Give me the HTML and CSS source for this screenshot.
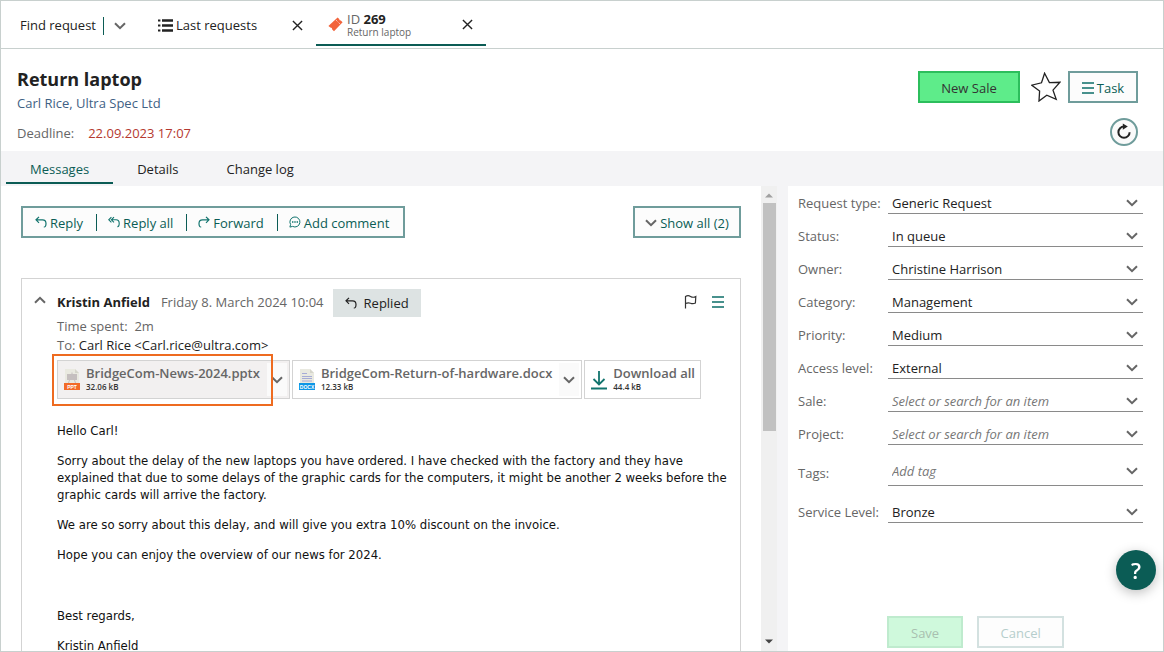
FILE: index.html
```html
<!DOCTYPE html>
<html lang="en">
<head>
<meta charset="utf-8">
<title>Return laptop</title>
<link rel="stylesheet" href="styles.css">
</head>
<body>
<svg class="symbols" aria-hidden="true">
  <symbol id="chevron" viewBox="0 0 12 8"><path d="M1 1.2 6 6.2 11 1.2" fill="none" stroke="currentColor" stroke-width="2"/></symbol>
  <symbol id="close" viewBox="0 0 12 12"><path d="M1 1 11 11M11 1 1 11" fill="none" stroke="currentColor" stroke-width="1.5"/></symbol>
  <symbol id="menu" viewBox="0 0 12 12"><path d="M0 1h12M0 6h12M0 11h12" fill="none" stroke="currentColor" stroke-width="1.4"/></symbol>
  <symbol id="reply" viewBox="0 0 12 12"><path d="M4 .8 1 3.8 4 6.8M1 3.8H7.5Q11 3.8 11 7.5T8.8 11" fill="none" stroke="currentColor" stroke-width="1.2"/></symbol>
</svg>
<div class="app">
  <nav class="topbar">
    <div class="find">
      <button class="plain" type="button">Find request</button>
      <button class="plain find-more" type="button" aria-label="More search options"><svg class="chevron"><use href="#chevron"/></svg></button>
    </div>
    <div class="last">
      <button class="plain last-label" type="button">
        <svg width="15" height="13" viewBox="0 0 15 13"><path d="M4 1.5h11M4 6.5h11M4 11.5h11" stroke="#222" stroke-width="2.6"/><path d="M0 1.5h2.4M0 6.5h2.4M0 11.5h2.4" stroke="#222" stroke-width="2.2"/></svg>
        Last requests
      </button>
      <button class="plain" type="button" aria-label="Close last requests"><svg class="close"><use href="#close"/></svg></button>
    </div>
    <div class="ticket">
      <svg width="15" height="15" viewBox="0 0 15 15"><path d="M9.6.4 11.2 2q0 1.6 1.6 1.6L14.6 5.2 6 14.2 4.2 12.4q.2-1.8-1.8-1.8L.4 8.9Z" fill="#f2643c"/><path d="m8 3 4.2 4.2" stroke="#fff" stroke-width=".7" stroke-dasharray="1.2 1"/></svg>
      <div class="ticket-text">
        <div class="ticket-id">ID <b>269</b></div>
        <div class="ticket-name">Return laptop</div>
      </div>
      <button class="plain" type="button" aria-label="Close request"><svg class="close"><use href="#close"/></svg></button>
    </div>
  </nav>

  <header class="header">
    <div>
      <h1>Return laptop</h1>
      <a class="contact" href="#contact">Carl Rice, Ultra Spec Ltd</a>
      <div class="deadline"><span>Deadline:</span><time>22.09.2023 17:07</time></div>
    </div>
    <div class="header-side">
      <div class="header-actions">
        <button class="btn btn-primary new-sale" type="button">New Sale</button>
        <button class="plain star" type="button" aria-label="Add to favourites"><svg width="30" height="30" viewBox="0 0 30 30"><path d="M13.6 1.2 18.4 10.6 28.8 10.3 22 18.2 25.2 27.4 15.8 23.2 8 29 8.6 19 .8 13.2 10.5 10.8Z" fill="#fff" stroke="#222" stroke-width="1.3"/></svg></button>
        <button class="btn btn-task" type="button"><svg class="menu"><use href="#menu"/></svg>Task</button>
      </div>
      <button class="refresh" type="button" aria-label="Refresh"><svg width="16" height="17" viewBox="0 0 16 17"><path d="M8.5 3.6H8A5.6 5.6 0 1 0 13.6 9.2" fill="none" stroke="#222" stroke-width="2"/><path d="M6.8.6 11.8 3.6 6.8 6.8Z" fill="#222"/></svg></button>
    </div>
  </header>

  <nav class="tabs">
    <button class="tab tab-active" type="button">Messages</button>
    <button class="tab" type="button">Details</button>
    <button class="tab" type="button">Change log</button>
  </nav>

  <div class="body">
    <main class="messages">
      <div class="toolbar">
        <div class="toolbar-group">
          <button type="button"><svg class="arrow"><use href="#reply"/></svg>Reply</button>
          <button type="button"><svg class="arrow" viewBox="0 0 12 12"><path d="M3.4 1.2.8 3.8 3.4 6.4M6 1.2 3.4 3.8 6 6.4M3.4 3.8H8Q11.2 3.8 11.2 7.3T9.4 10.6" fill="none" stroke="currentColor" stroke-width="1.1"/></svg>Reply all</button>
          <button type="button"><svg class="arrow" viewBox="0 0 12 12"><path d="M8 .8 11 3.8 8 6.8M11 3.8H4.5Q1 3.8 1 7.5T3.2 11" fill="none" stroke="currentColor" stroke-width="1.2"/></svg>Forward</button>
          <button type="button"><svg class="arrow" viewBox="0 0 12 12"><path d="M.9 11.1 1.6 8.5A5 5 0 1 1 3.6 10.4Z" fill="none" stroke="currentColor"/><path d="M3 6h1.4M5.3 6h1.4M7.6 6H9" stroke="currentColor" stroke-width="1.4"/></svg>Add comment</button>
        </div>
        <button class="btn show-all" type="button"><svg class="chevron"><use href="#chevron"/></svg>Show all (2)</button>
      </div>

      <article class="card">
        <button class="plain collapse" type="button" aria-label="Collapse message"><svg class="chevron chevron-up"><use href="#chevron"/></svg></button>
        <div class="card-main">
          <div class="card-head">
            <b>Kristin Anfield</b>
            <time>Friday 8. March 2024 10:04</time>
            <span class="replied"><svg class="arrow"><use href="#reply"/></svg>Replied</span>
            <button class="plain flag" type="button" aria-label="Flag message"><svg width="13" height="14" viewBox="0 0 13 14"><path d="M1.5 13.5V1.5Q4-.2 6.5 1.4T11.8 1.6L11.4 8Q9 9.2 6.5 8.2T1.5 8.6" fill="none" stroke="#333" stroke-width="1.2"/></svg></button>
            <button class="plain" type="button" aria-label="Message menu"><svg class="menu"><use href="#menu"/></svg></button>
          </div>
          <div class="meta">Time spent: &nbsp;2m</div>
          <div class="meta">To: <span>Carl Rice &lt;Carl.rice@ultra.com&gt;</span></div>

          <div class="files">
            <div class="file file-selected">
              <svg class="file-icon" width="16" height="21" viewBox="0 0 16 21"><path d="M1 0h10l4 4v10H1Z" fill="#e9e9e0"/><path d="M11 0l4 4h-4Z" fill="#d5d5cb"/><path d="M3 5h10v6H3ZM7.5 3.5h1V5h-1ZM5 11h1l-1 3H4ZM10 11h1l1 3h-1Z" fill="#c5bfbf"/><path d="M0 14h16v7H0Z" fill="#f36b27"/><text x="8" y="19.5" class="ext">PPT</text></svg>
              <div class="file-text"><a href="#pptx">BridgeCom-News-2024.pptx</a><small>32.06 kB</small></div>
              <button class="file-more" type="button" aria-label="Options for BridgeCom-News-2024.pptx"><svg class="chevron"><use href="#chevron"/></svg></button>
              <span class="highlight"></span>
            </div>
            <div class="file">
              <svg class="file-icon" width="16" height="21" viewBox="0 0 16 21"><path d="M1 0h10l4 4v10H1Z" fill="#e9e9e0"/><path d="M11 0l4 4h-4Z" fill="#d5d5cb"/><path d="M3 4.5h5M3 7.5h10M3 9.5h10M3 12h10" stroke="#a6abd6"/><path d="M0 14h16v7H0Z" fill="#0d96e6"/><text x="8" y="19.5" class="ext">DOCX</text></svg>
              <div class="file-text"><a href="#docx">BridgeCom-Return-of-hardware.docx</a><small>12.33 kB</small></div>
              <button class="file-more" type="button" aria-label="Options for BridgeCom-Return-of-hardware.docx"><svg class="chevron"><use href="#chevron"/></svg></button>
            </div>
            <div class="file">
              <svg class="file-icon" width="16" height="20" viewBox="0 0 16 20"><path d="M8 1v13M2.5 9 8 14.5 13.5 9" fill="none" stroke="#12746e" stroke-width="1.8"/><path d="M0 18.5h16" stroke="#12746e" stroke-width="2"/></svg>
              <div class="file-text"><a href="#all">Download all</a><small>44.4 kB</small></div>
            </div>
          </div>

          <div class="letter">
            <p>Hello Carl!</p>
            <p>Sorry about the delay of the new laptops you have ordered. I have checked with the factory and they have<br>explained that due to some delays of the graphic cards for the computers, it might be another 2 weeks before the<br>graphic cards will arrive the factory.</p>
            <p>We are so sorry about this delay, and will give you extra 10% discount on the invoice.</p>
            <p>Hope you can enjoy the overview of our news for 2024.</p>
            <p class="blank">&nbsp;</p>
            <p>Best regards,</p>
            <p>Kristin Anfield</p>
          </div>
        </div>
      </article>
    </main>

    <div class="scroll">
      <svg width="8" height="5" viewBox="0 0 8 5"><path d="M0 4.5 4 .5 8 4.5Z" fill="#a0a0a0"/></svg>
      <div class="thumb"></div>
      <svg width="8" height="5" viewBox="0 0 8 5"><path d="M0 .5 4 4.5 8 .5Z" fill="#444"/></svg>
    </div>

    <form class="panel">
      <div class="row"><label for="type">Request type:</label><div class="field"><select id="type"><option>Generic Request</option></select><svg class="chevron"><use href="#chevron"/></svg></div></div>
      <div class="row"><label for="status">Status:</label><div class="field"><select id="status"><option>In queue</option></select><svg class="chevron"><use href="#chevron"/></svg></div></div>
      <div class="row"><label for="owner">Owner:</label><div class="field"><select id="owner"><option>Christine Harrison</option></select><svg class="chevron"><use href="#chevron"/></svg></div></div>
      <div class="row"><label for="category">Category:</label><div class="field"><select id="category"><option>Management</option></select><svg class="chevron"><use href="#chevron"/></svg></div></div>
      <div class="row"><label for="priority">Priority:</label><div class="field"><select id="priority"><option>Medium</option></select><svg class="chevron"><use href="#chevron"/></svg></div></div>
      <div class="row"><label for="access">Access level:</label><div class="field"><select id="access"><option>External</option></select><svg class="chevron"><use href="#chevron"/></svg></div></div>
      <div class="row"><label for="sale">Sale:</label><div class="field"><input id="sale" type="text" placeholder="Select or search for an item"><svg class="chevron"><use href="#chevron"/></svg></div></div>
      <div class="row"><label for="project">Project:</label><div class="field"><input id="project" type="text" placeholder="Select or search for an item"><svg class="chevron"><use href="#chevron"/></svg></div></div>
      <div class="row row-tags"><label for="tags">Tags:</label><div class="field"><input id="tags" type="text" placeholder="Add tag"><svg class="chevron"><use href="#chevron"/></svg></div></div>
      <div class="row"><label for="level">Service Level:</label><div class="field"><select id="level"><option>Bronze</option></select><svg class="chevron"><use href="#chevron"/></svg></div></div>
      <div class="panel-actions">
        <button class="btn btn-primary" type="submit" disabled>Save</button>
        <button class="btn cancel" type="button" disabled>Cancel</button>
      </div>
    </form>
  </div>
  <button class="help" type="button" aria-label="Help">?</button>
</div>
</body>
</html>
```
FILE: styles.css
```css
* { box-sizing: border-box; }

body {
  margin: 0;
  font: 13px/17px "Segoe UI", "Open Sans", "Noto Sans", sans-serif;
  color: #222;
  background: #fff;
}

button, input, select { font: inherit; color: inherit; }
a { color: inherit; text-decoration: none; }
svg { display: block; flex: none; }
.symbols { display: none; }

.app {
  display: flex;
  flex-direction: column;
  height: 100vh;
  overflow: hidden;
  border: 1px solid #c8d0ce;
}

.plain { display: flex; align-items: center; padding: 0; border: 0; background: none; }
.chevron { width: 12px; height: 8px; color: #666; }
.chevron-up { transform: rotate(180deg); }
.close { width: 11px; height: 11px; color: #222; }
.menu { width: 12px; height: 12px; color: #0d6e68; }
.arrow { width: 12px; height: 12px; }

/* Top bar */
.topbar {
  display: flex;
  flex: none;
  height: 48px;
  padding-left: 19px;
  border-bottom: 1px solid #c8d0ce;
}
.find, .last { display: flex; align-items: center; padding-top: 2px; }
.find { width: 138px; }
.find-more { height: 18px; margin-left: 7px; padding-left: 10px; border-left: 1px solid #0b5c55; }
.last { width: 145px; justify-content: space-between; }
.last-label { gap: 3px; }
.ticket {
  display: flex;
  align-items: center;
  width: 170px;
  height: 45px;
  margin-left: 13px;
  padding: 4px 13px 0 12px;
  border-bottom: 2px solid #0b5c55;
}
.ticket-text { flex: 1; margin-left: 4px; padding-top: 2px; }
.ticket-id { line-height: 13px; color: #666; }
.ticket-id b { color: #222; }
.ticket-name { font-size: 10px; line-height: 12px; color: #666; }

/* Request header */
.header {
  display: flex;
  flex: none;
  justify-content: space-between;
  height: 102px;
  padding: 18px 25px 0 16px;
}
h1 { margin: 0; font-size: 18px; line-height: 24px; }
.contact { display: block; margin-top: 4px; color: #3f6184; }
.deadline { display: flex; gap: 14px; margin-top: 13px; color: #666; }
.deadline time { color: #b5392f; }
.header-side { display: flex; flex-direction: column; align-items: flex-end; gap: 15px; padding-top: 4px; }
.header-actions { display: flex; align-items: center; }
.star { margin: 0 7px 0 11px; }

.btn {
  display: flex;
  align-items: center;
  justify-content: center;
  gap: 3px;
  height: 32px;
  padding: 2px 14px 0;
  border: 2px solid #6f9c9b;
  background: #fcfcfc;
  color: #0b5c55;
}
.btn-primary { padding: 2px 22px 0; border-color: #2cbe5c; background: #5eec8a; color: #333; }
.new-sale { width: 102px; padding: 2px 0 0; }
.btn-task { width: 70px; padding: 2px 8px 0; }
.cancel { width: 87px; }
.btn:disabled { border-color: #d3e1e0; background: #fdfdfd; color: #b6cecc; }
.btn-primary:disabled { border-color: #bfebce; background: #cff9dc; color: #a9bfb0; }
.refresh {
  display: grid;
  place-items: center;
  width: 28px;
  height: 28px;
  padding: 0 0 2px;
  border: 2px solid #6f9c9b;
  border-radius: 50%;
  background: #fafafa;
}

/* Tabs */
.tabs { display: flex; flex: none; height: 35px; padding: 0 5px; background: #f4f4f6; }
.tab {
  height: 33px;
  padding: 5px 24px 0;
  border: 0;
  border-bottom: 2px solid transparent;
  background: none;
}
.tab-active { border-color: #0b5c55; color: #0b5c55; }

.body { display: flex; flex: 1; min-height: 0; }

/* Messages */
.messages { flex: 1; min-width: 0; padding: 20px 20px 0; overflow: hidden; }
.toolbar { display: flex; justify-content: space-between; margin-bottom: 40px; }
.toolbar-group {
  display: flex;
  align-items: center;
  height: 32px;
  padding-right: 1px;
  border: 2px solid #6f9c9b;
  background: #fcfcfc;
  color: #0b5c55;
}
.toolbar-group button {
  display: flex;
  align-items: center;
  gap: 3px;
  height: 17px;
  padding: 2px 13px 0 12px;
  border: 0;
  background: none;
}
.toolbar-group button + button { padding-left: 11px; border-left: 1px solid #0b5c55; }
.toolbar-group .arrow { margin-bottom: 2px; color: #12746e; }
.show-all { width: 108px; padding: 2px 0 0; }

.card {
  display: flex;
  gap: 11px;
  min-height: 500px;
  padding: 10px 16px 0 12px;
  border: 1px solid #d3d3d3;
}
.collapse { height: 22px; }
.card-main { flex: 1; min-width: 0; }
.card-head { display: flex; align-items: center; height: 28px; }
.card-head b, .card-head time { padding-bottom: 2px; }
.card-head time { margin: 0 9px 0 11px; color: #666; }
.replied {
  display: flex;
  align-items: center;
  gap: 7px;
  height: 28px;
  padding: 0 12px;
  background: #dde3e3;
}
.flag { margin: 0 15px 0 auto; }
.card-head .flag, .card-head .flag + button { padding-bottom: 2px; }
.meta { color: #666; line-height: 19px; }
.meta span { color: #222; }

.files { display: flex; gap: 2px; margin: 5px 0 0; }
.file {
  position: relative;
  display: flex;
  align-items: center;
  flex: none;
  height: 39px;
  padding: 0 5px 0 6px;
  border: 1px solid #d3d3d3;
}
.file-selected { background: #f2f0f0; }
.file-text { display: flex; flex-direction: column; margin-left: 6px; padding-bottom: 2px; color: #666; }
.file-text a { font-weight: 600; line-height: 16px; }
.file-text small { font-size: 8px; line-height: 11px; font-weight: 600; color: #333; }
.file-more {
  display: grid;
  place-items: center;
  width: 20px;
  height: 33px;
  margin: 0 -3px 0 7px;
  padding: 0;
  border: 0;
  background: #fafafa;
}
.ext { font: bold 5px "Liberation Sans", sans-serif; fill: #fff; text-anchor: middle; }
.highlight {
  position: absolute;
  inset: -7px 16px -8px -6px;
  border: 2px solid #ee6b20;
  pointer-events: none;
}

.letter { margin-top: 23px; color: #111; font-family: "Segoe UI", "DejaVu Sans Condensed", sans-serif; white-space: nowrap; }
.letter p { margin: 0 0 13px; }
.letter .blank { line-height: 18px; }

/* Scroll bar */
.scroll {
  display: flex;
  flex-direction: column;
  align-items: center;
  width: 16px;
  padding: 7px 0;
  background: #f0f0f0;
}
.thumb { width: 13px; height: 228px; margin: 5px 0 auto; background: #c1c1c1; }

/* Properties */
.panel {
  display: flex;
  flex-direction: column;
  gap: 11px;
  width: 386px;
  padding: 6px 20px 3px 10px;
  border-left: 11px solid #f4f4f6;
}
.row { display: flex; align-items: center; height: 22px; color: #666; }
.row label { width: 90px; flex: none; }
.row-tags { height: 30px; margin-bottom: 4px; }
.row-tags label { padding-top: 5px; }
.field { display: flex; align-items: center; flex: 1; height: 100%; padding-right: 5px; border-bottom: 1px solid #8a8a8a; }
.field select, .field input {
  flex: 1;
  min-width: 0;
  height: 100%;
  padding: 1px 0 0 4px;
  border: 0;
  outline: 0;
  appearance: none;
  background: none;
  color: #222;
}
.field input::placeholder { color: #777; font-style: italic; opacity: 1; }
.panel-actions { display: flex; gap: 14px; margin: auto 0 0 89px; }

.help {
  position: fixed;
  right: 8px;
  bottom: 62px;
  width: 40px;
  height: 40px;
  padding: 0;
  border: 0;
  border-radius: 50%;
  background: #0b5c55;
  box-shadow: 0 3px 12px rgba(0, 0, 0, .25);
  color: #fff;
  font-size: 22px;
  font-weight: 600;
}
```
